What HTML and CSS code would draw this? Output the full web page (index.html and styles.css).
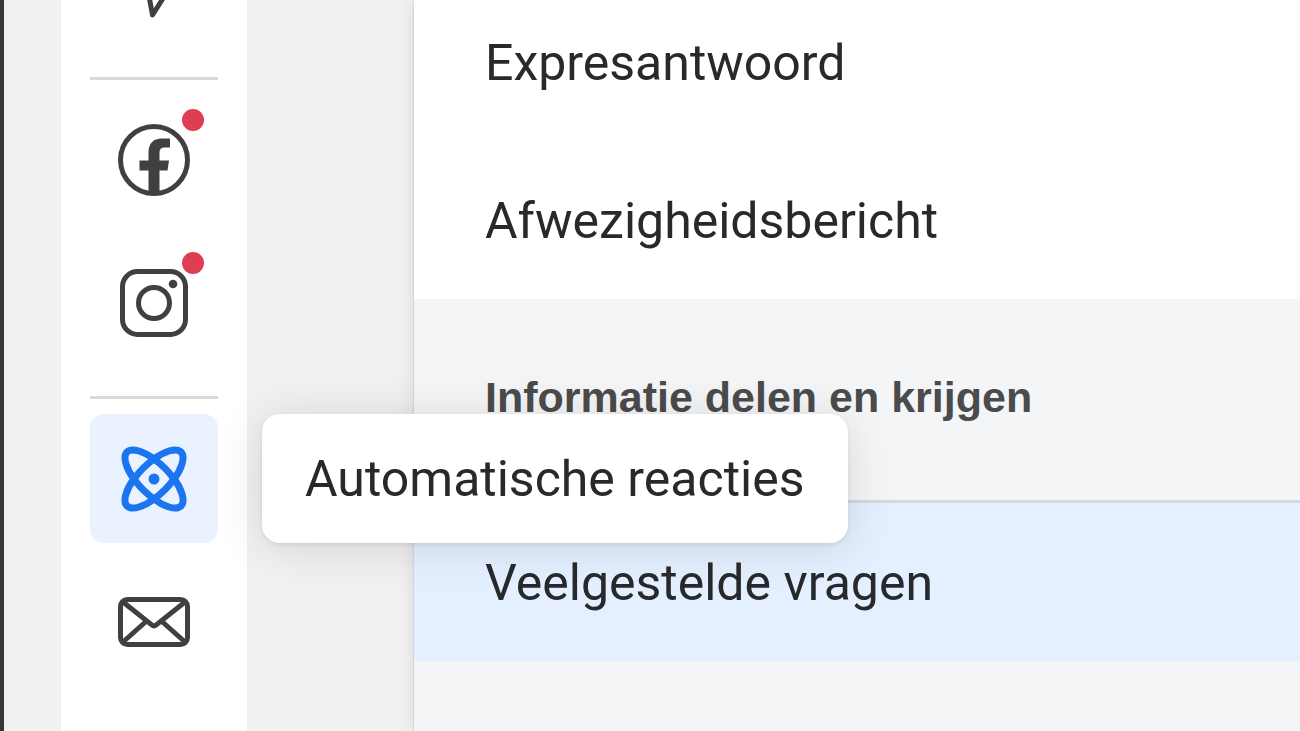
FILE: index.html
```html
<!DOCTYPE html>
<html lang="nl">
<head>
<meta charset="UTF-8">
<meta name="viewport" content="width=device-width, initial-scale=1.0">
<title>Automatische reacties</title>
<link rel="stylesheet" href="styles.css">
</head>
<body>
<div class="app">
  <nav class="rail">
    <button class="rail-item rail-item-cut" aria-label="Verzenden">
      <svg width="72" height="20" viewBox="0 0 72 20"><path d="M31-4L34.500 15L46.500-4" fill="none" stroke="#404040" stroke-width="5" stroke-linejoin="round"/></svg>
    </button>
    <hr class="rail-line">
    <button class="rail-item" aria-label="Facebook">
      <svg width="72" height="72" viewBox="0 0 72 72"><circle cx="36" cy="36" r="33.500" fill="none" stroke="#404040" stroke-width="5"/><path d="M30.500 69V46.500H21.500V36.500H30.500V29Q30.500 14.500 44 14.500H52V23.500H46.500Q41.500 23.500 41.500 28.500V36.500H51L49.500 46.500H41.500V69Z" fill="#404040"/></svg>
      <span class="dot"></span>
    </button>
    <button class="rail-item" aria-label="Instagram">
      <svg width="72" height="72" viewBox="0 0 72 72"><rect x="4.500" y="4.500" width="63" height="63" rx="15" fill="none" stroke="#404040" stroke-width="5"/><circle cx="36" cy="36" r="15.500" fill="none" stroke="#404040" stroke-width="5"/><circle cx="55" cy="17" r="4.300" fill="#404040"/></svg>
      <span class="dot"></span>
    </button>
    <hr class="rail-line">
    <button class="rail-item active" aria-describedby="tip" aria-label="Automatische reacties">
      <svg width="72" height="72" viewBox="0 0 72 72" fill="none" stroke="#1b74f0" stroke-width="7"><path d="M16 36C21 29 29 21 36 16C45 9 58 4 63 9C68 14 63 27 56 36C51 43 43 51 36 56C27 63 14 68 9 63C4 58 9 45 16 36Z"/><path d="M56 36C51 29 43 21 36 16C27 9 14 4 9 9C4 14 9 27 16 36C21 43 29 51 36 56C45 63 58 68 63 63C68 58 63 45 56 36Z"/><circle cx="36" cy="36" r="5.500" fill="#1b74f0" stroke="none"/></svg>
      <span class="tooltip" id="tip" role="tooltip">Automatische reacties</span>
    </button>
    <button class="rail-item" aria-label="Inbox">
      <svg width="72" height="50" viewBox="0 0 72 50" fill="none" stroke="#404040" stroke-width="5"><rect x="2.500" y="2.500" width="67" height="45" rx="7"/><path d="M5 5L34 28Q36 30 38 28L67 5M5 45L28 24.500M67 45L44 24.500"/></svg>
    </button>
  </nav>

  <main class="panel">
    <a class="row row-first" href="#">Expresantwoord</a>
    <a class="row" href="#">Afwezigheidsbericht</a>
    <h2 class="section-title">Informatie delen en krijgen</h2>
    <a class="row selected" href="#">Veelgestelde vragen</a>
  </main>
</div>
</body>
</html>
```

FILE: styles.css
```css
* { box-sizing: border-box; margin: 0; padding: 0; }
body { font-family: Roboto, "Liberation Sans", sans-serif; background: #f1f1f1; color: #27292b; }
.app { display: flex; min-height: 100vh; padding-left: 57px; border-left: 4px solid #383636; }

.rail { display: flex; flex-direction: column; gap: 14px; width: 186px; padding: 0 29px; background: #fff; flex-shrink: 0; position: relative; z-index: 1; }
.rail-line { height: 3px; border: none; background: #d9d9d9; margin: 15px 0 1px; }
.rail-item { position: relative; display: flex; align-items: center; justify-content: center; height: 129px; background: none; border: none; border-radius: 14px; font: inherit; color: inherit; cursor: pointer; }
.rail-item-cut { height: 48px; align-items: flex-start; }
.rail-item.active { background: #ebf2ff; }
.dot { position: absolute; top: 14px; right: 14px; width: 22px; height: 22px; border-radius: 50%; background: #de3e4f; }
.tooltip { position: absolute; left: 172px; top: 0; height: 129px; padding: 0 43px; line-height: 131px; font-size: 50px; white-space: nowrap; background: #fff; border-radius: 18px; box-shadow: 0 2px 4px rgba(0,0,0,0.08), 0 4px 48px rgba(0,0,0,0.12); }

.panel { flex: 1; min-width: 0; margin-left: 167px; background: #f4f5f7; box-shadow: 0 0 2px rgba(0,0,0,0.2), 0 0 18px rgba(0,0,0,0.1); }
.row { display: block; height: 158px; padding: 50px 71px 0; line-height: 60px; font-size: 50px; color: inherit; text-decoration: none; background: #fff; }
.row-first { height: 141px; padding-top: 33px; }
.row.selected { background: #e4f0ff; }
.section-title { height: 204px; padding: 72px 71px 0; border-bottom: 3px solid #d5d9de; font-family: "Liberation Sans", Arial, sans-serif; font-size: 43px; line-height: 52px; font-weight: 700; color: #4b4b4b; }
```
